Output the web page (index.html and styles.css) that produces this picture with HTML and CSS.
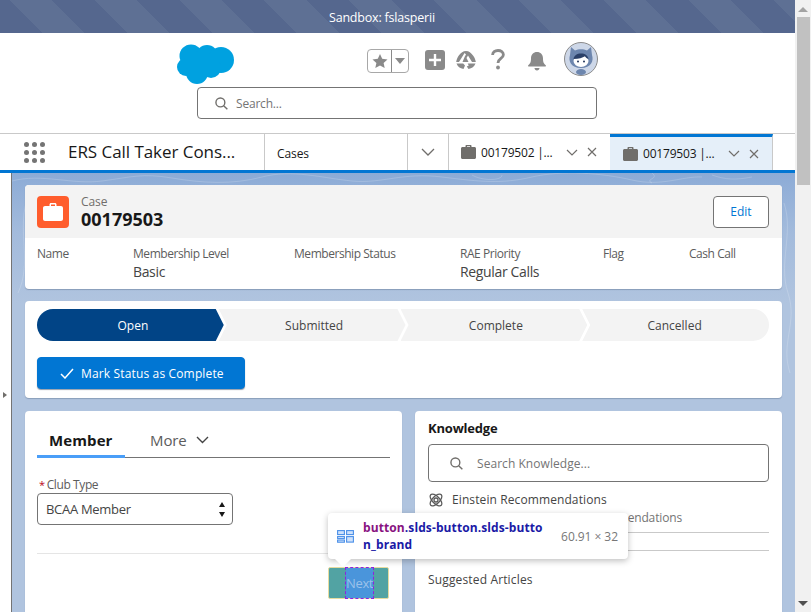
FILE: index.html
```html
<!DOCTYPE html>
<html lang="en">
<head>
<meta charset="utf-8">
<title>ERS Call Taker Console</title>
<link rel="stylesheet" href="styles.css">
</head>
<body>
<div class="page">
  <div class="main">
    <div class="sandbox">Sandbox: fslasperii</div>
    <header class="header">
      <div class="header-top">
        <svg class="logo" width="58" height="42" viewBox="0 0 58 42"><g fill="#00a1e0"><circle cx="14" cy="13" r="11.5"/><circle cx="30" cy="13" r="11"/><circle cx="44" cy="17" r="13"/><circle cx="9" cy="24" r="9"/><circle cx="20" cy="30" r="11"/><circle cx="34" cy="25" r="10"/><rect x="10" y="12" width="30" height="16"/></g></svg>
        <div class="fav">
          <span class="fav-star"><svg width="16" height="16" viewBox="0 0 16 16"><path fill="#8a8a8a" d="M8 1l2.200 4.800 5.300.6-3.900 3.500 1.100 5.100L8 12.400 3.300 15l1.100-5.100L.5 6.400l5.300-.6z"/></svg></span>
          <span class="fav-arrow"><svg width="10" height="6" viewBox="0 0 10 6"><path fill="#8a8a8a" d="M0 0h10L5 6z"/></svg></span>
        </div>
        <svg class="plus" width="20" height="20" viewBox="0 0 20 20"><rect width="20" height="20" rx="3" fill="#8a8a8a"/><path d="M10 4v12M4 10h12" stroke="#fff" stroke-width="2.400"/></svg>
        <svg class="trail" width="20" height="20" viewBox="0 0 20 20"><path fill="#8a8a8a" d="M10 1c3 0 5 2 7 4.500 1.600 2 2.600 4.500 2.800 6.500H16L12 5.500 10.500 8l2 4H6.500L8.800 6.500 10 4.500 8.600 3 3 12H.2C.5 9.500 1.500 7 3 5.200 5 2.800 7 1 10 1zM.5 13.500h6.700L9 15.500 7.500 19C4 18.500 1.500 16.500.5 13.500zm11.200 0h7.800c-1 3-3.700 5-7 5.500l-1.700-2.600 2-1-1.100-1.900z"/></svg>
        <svg class="help" width="14" height="21" viewBox="0 0 14 21"><path fill="none" stroke="#8a8a8a" stroke-width="2.800" d="M1.600 6C1.600 3.200 4 1.500 7 1.500s5.400 1.700 5.400 4.300c0 3.700-5.400 3.700-5.400 8.200"/><circle cx="7" cy="18.500" r="1.900" fill="#8a8a8a"/></svg>
        <svg class="bell" width="20" height="20" viewBox="0 0 20 20"><path fill="#8a8a8a" d="M10 1c3.500 0 6 2.500 6 6.500 0 4 1 5 2.500 6.500.8.800.5 1.500-.5 1.500H2c-1 0-1.300-.7-.5-1.500C3 12.500 4 11.500 4 7.500 4 3.500 6.500 1 10 1zM7.500 17h5c0 1.400-1.100 2.500-2.500 2.500S7.500 18.400 7.500 17z"/></svg>
        <svg class="avatar" width="34" height="34" viewBox="0 0 34 34"><circle cx="17" cy="17" r="16.500" fill="#cdd7e8" stroke="#8b8b8b"/><path fill="#6d86ae" d="M7 5l4 3.500c3.500-1.800 8.500-1.800 12 0L27 5l1 8c2 6-1 13-11 13S4 19 6 13z"/><ellipse cx="17" cy="30" rx="5" ry="3" fill="#6d86ae"/><ellipse cx="17" cy="19" rx="7.500" ry="6" fill="#fff"/><path fill="#2b4068" d="M9.500 17c.5-3.500 3.500-5.500 7.500-5.500s7 2 7.500 5.500c-2-.6-3-1.800-3.500-2.800-2.500 1.700-6 2.400-11.500 2.800z"/><circle cx="14" cy="19.500" r="1" fill="#1f3358"/><circle cx="20" cy="19.500" r="1" fill="#1f3358"/></svg>
      </div>
      <div class="global-search">
        <svg class="ico-search" width="13" height="13" viewBox="0 0 14 14"><circle cx="5.800" cy="5.800" r="4.800" fill="none" stroke="#706e6b" stroke-width="1.500"/><path d="M9.300 9.300l4 4" stroke="#706e6b" stroke-width="1.500"/></svg>
        <span class="placeholder">Search...</span>
      </div>
    </header>
    <nav class="nav">
      <div class="launcher">
        <i></i><i></i><i></i><i></i><i></i><i></i><i></i><i></i><i></i>
      </div>
      <div class="app-name">ERS Call Taker Cons...</div>
      <div class="nav-item">Cases</div>
      <div class="nav-more"><svg class="chev" width="14" height="8" viewBox="0 0 14 8"><path d="M1 1l6 6 6-6" fill="none" stroke="#706e6b" stroke-width="1.300"/></svg></div>
      <div class="tab">
        <svg class="brief" width="15" height="14" viewBox="0 0 15 14"><path fill="#706e6b" d="M4.500 2V1c0-.6.4-1 1-1h4c.6 0 1 .4 1 1v1h3c.8 0 1.500.7 1.500 1.500V12.500c0 .8-.7 1.500-1.500 1.500h-12C.7 14 0 13.300 0 12.500V3.500C0 2.700.7 2 1.500 2zM6 2h3V1.200H6z"/></svg>
        <span class="tab-text">00179502 |...</span>
        <svg class="tab-chev" width="12" height="7" viewBox="0 0 12 7"><path d="M1 1l5 5 5-5" fill="none" stroke="#706e6b" stroke-width="1.200"/></svg>
        <svg class="tab-x" width="10" height="10" viewBox="0 0 10 10"><path d="M1 1l8 8M9 1l-8 8" stroke="#706e6b" stroke-width="1.200"/></svg>
      </div>
      <div class="tab tab-active">
        <svg class="brief" width="15" height="14" viewBox="0 0 15 14"><path fill="#706e6b" d="M4.500 2V1c0-.6.4-1 1-1h4c.6 0 1 .4 1 1v1h3c.8 0 1.500.7 1.500 1.500V12.500c0 .8-.7 1.500-1.500 1.500h-12C.7 14 0 13.300 0 12.500V3.500C0 2.700.7 2 1.500 2zM6 2h3V1.200H6z"/></svg>
        <span class="tab-text">00179503 |...</span>
        <svg class="tab-chev" width="12" height="7" viewBox="0 0 12 7"><path d="M1 1l5 5 5-5" fill="none" stroke="#706e6b" stroke-width="1.200"/></svg>
        <svg class="tab-x" width="10" height="10" viewBox="0 0 10 10"><path d="M1 1l8 8M9 1l-8 8" stroke="#706e6b" stroke-width="1.200"/></svg>
      </div>
    </nav>
    <div class="workspace">
      <aside class="rail"><svg width="4" height="6" viewBox="0 0 4 6"><path d="M0 0l4 3-4 3z" fill="#706e6b"/></svg></aside>
      <div class="content">
        <svg class="topo" width="783" height="439" viewBox="0 0 783 439" aria-hidden="true">
          <g fill="none" stroke="#fff" stroke-opacity=".18">
            <path d="M0 8c30-8 60 4 90 0s40-8 70-3 60 7 90-1 60 1 90 4 50-9 90-4 60 7 90 0 70-4 100 3 50-4 70-3"/>
            <path d="M14 30C6 60 20 90 6 120M772 30c10 30-6 60 4 90s-8 50 2 80"/>
            <path d="M460 2c10 6 30 6 30 0M640 0c8 6-8 6 0 10M700 2c14 5 24 5 40 2"/>
          </g>
        </svg>
        <section class="card case-card">
          <div class="case-head">
            <div class="case-icon"><svg width="20" height="18" viewBox="0 0 20 18"><path fill="#fff" d="M6.500 3V1.500C6.500.7 7.200 0 8 0h4c.8 0 1.500.7 1.500 1.500V3h4.500c1.100 0 2 .9 2 2v11c0 1.100-.9 2-2 2H2c-1.100 0-2-.9-2-2V5c0-1.100.9-2 2-2zM8 3h4V1.500H8z"/></svg></div>
            <div class="case-title">
              <div class="case-type">Case</div>
              <div class="case-num">00179503</div>
            </div>
            <button class="btn-edit">Edit</button>
          </div>
          <div class="highlights">
            <div><div class="hl-label">Name</div></div>
            <div><div class="hl-label">Membership Level</div><div class="hl-value">Basic</div></div>
            <div><div class="hl-label">Membership Status</div></div>
            <div><div class="hl-label">RAE Priority</div><div class="hl-value">Regular Calls</div></div>
            <div><div class="hl-label">Flag</div></div>
            <div><div class="hl-label">Cash Call</div></div>
          </div>
        </section>
        <section class="card progress-card">
          <div class="path">
            <div class="step step-current">Open</div>
            <div class="step">Submitted</div>
            <div class="step">Complete</div>
            <div class="step step-last">Cancelled</div>
          </div>
          <button class="btn-mark"><svg width="14" height="11" viewBox="0 0 14 11"><path d="M1 6l4 4 8-9" fill="none" stroke="#fff" stroke-width="1.500"/></svg>Mark Status as Complete</button>
        </section>
        <div class="columns">
          <section class="card member-card">
            <div class="tabs">
              <div class="tabs-active">Member</div>
              <div class="tabs-more">More<svg width="13" height="8" viewBox="0 0 13 8"><path d="M1 1l5.500 5.500L12 1" fill="none" stroke="#444" stroke-width="1.400"/></svg></div>
            </div>
            <div class="field-label"><span class="req">*</span>Club Type</div>
            <div class="select">BCAA Member
              <svg width="6" height="15" viewBox="0 0 6 15"><path fill="#181818" d="M3 0l3 5H0zM3 15L0 10h6z"/></svg>
            </div>
            <div class="form-line"></div>
            <div class="form-foot">
              <button class="btn-next"><span class="next-content">Next</span></button>
            </div>
          </section>
          <section class="card know-card">
            <h2 class="know-title">Knowledge</h2>
            <div class="know-search">
              <svg width="13" height="13" viewBox="0 0 14 14"><circle cx="5.800" cy="5.800" r="4.800" fill="none" stroke="#706e6b" stroke-width="1.500"/><path d="M9.300 9.300l4 4" stroke="#706e6b" stroke-width="1.500"/></svg>
              <span class="placeholder know-ph">Search Knowledge...</span>
            </div>
            <div class="einstein">
              <svg width="16" height="16" viewBox="0 0 16 16"><g fill="none" stroke="#5c5c5c" stroke-width="1.300"><ellipse cx="8" cy="8" rx="7.500" ry="3.600" transform="rotate(45 8 8)"/><ellipse cx="8" cy="8" rx="7.500" ry="3.600" transform="rotate(-45 8 8)"/><circle cx="8" cy="8" r="2"/></g></svg>
              <span>Einstein Recommendations</span>
            </div>
            <div class="know-sub">No Recommendations</div>
            <div class="know-line"></div>
            <div class="know-gap"></div>
            <div class="suggested">Suggested Articles</div>
          </section>
        </div>
      </div>
    </div>
  </div>
  <div class="scrollbar">
    <svg width="10" height="5" viewBox="0 0 10 5"><path d="M5 0l5 5H0z" fill="#a3a3a3"/></svg>
    <div class="scroll-thumb"></div>
    <svg class="scroll-down" width="10" height="5" viewBox="0 0 10 5"><path d="M0 0h10L5 5z" fill="#505050"/></svg>
  </div>
  <div class="tooltip">
    <svg width="17" height="13" viewBox="0 0 17 13"><g fill="#cfe2fb" stroke="#4a8fe8" stroke-width="1.100"><rect x=".6" y=".6" width="6.800" height="4"/><rect x="9.600" y=".6" width="6.800" height="4"/><rect x=".6" y="6.600" width="6.800" height="1.800" fill="none"/><rect x="9.600" y="6.600" width="6.800" height="5.500"/><rect x=".6" y="10" width="6.800" height="2.200"/></g></svg>
    <div class="tip-sel"><span class="tip-tag">button</span><span class="tip-cls">.slds-button.slds-button_brand</span></div>
    <div class="tip-size">60.91 × 32</div>
  </div>
</div>
</body>
</html>
```

FILE: styles.css
```css
* { box-sizing: border-box; }
html, body { margin: 0; padding: 0; }
body { font-family: "Open Sans", "Noto Sans", "Liberation Sans", sans-serif; color: #3e3e3c; overflow: hidden; }
button { font-family: inherit; cursor: default; }

.page { position: relative; display: flex; width: 811px; height: 612px; overflow: hidden; background: #f1f1f1; }
.main { width: 795px; height: 612px; display: flex; flex-direction: column; flex: none; }

.sandbox { height: 33px; line-height: 36px; padding-left: 329px; color: #fff; font-size: 12.500px; letter-spacing: -.2px; white-space: nowrap;
  background: repeating-linear-gradient(45deg, #55678e 0 30px, #5e7094 30px 60px); }

.header { height: 100px; background: #fff; flex: none; padding-top: 9px; }
.header-top { display: flex; align-items: flex-start; padding-left: 177px; height: 45px; }
.logo { margin-top: 1px; }
.fav { display: flex; width: 42px; height: 24px; margin: 7px 0 0 132px; border: 1px solid #a8a8a8; border-radius: 4px; }
.fav-star { width: 24px; border-right: 1px solid #8a8a8a; display: flex; align-items: center; justify-content: center; }
.fav-arrow { flex: 1; display: flex; align-items: center; justify-content: center; }
.plus { margin: 8px 0 0 16px; }
.trail { margin: 8px 0 0 11px; }
.help { margin: 7px 0 0 15px; }
.bell { margin: 9px 0 0 22px; }
.avatar { margin-left: 17px; }
.global-search { display: flex; align-items: center; width: 400px; height: 32px; margin-left: 197px; border: 1px solid #747474; border-radius: 4px; padding-left: 17px; }
.ico-search { margin-right: 8px; }
.placeholder { font-size: 12px; color: #747474; letter-spacing: -.2px; }
.know-ph { letter-spacing: .05px; }

.nav { height: 40px; flex: none; display: flex; background: #fff; border-top: 1px solid #c9c9c9; border-bottom: 3px solid #0176d3; }
.launcher { width: 68px; padding: 8px 23px 0 24px; display: grid; grid-template-columns: repeat(3, 5px); grid-auto-rows: 5px; gap: 3px; flex: none; align-content: start; }
.launcher i { background: #747474; border-radius: 50%; }
.app-name { width: 196px; font-size: 17px; line-height: 36px; color: #181818; letter-spacing: -.05px; white-space: nowrap; flex: none; }
.nav-item { width: 143px; border-left: 1px solid #c9c9c9; padding-left: 12px; font-size: 12px; line-height: 39px; color: #181818; flex: none; letter-spacing: -.1px; }
.nav-more { width: 41px; border-left: 1px solid #c9c9c9; display: flex; align-items: center; justify-content: center; flex: none; }
.tab { width: 162px; flex: none; display: flex; align-items: center; border-left: 1px solid #c9c9c9; padding-left: 12px; position: relative; }
.tab-text { font-size: 12px; color: #181818; margin-left: 5px; width: 85px; white-space: nowrap; letter-spacing: -.2px; line-height: 18px; padding-top: 1px; }
.tab-chev { margin-left: 0; }
.tab-x { margin-left: 9px; }
.tab-active { width: 163px; background: #e5eff9; border-top: 3px solid #0176d3; border-right: 1px solid #c9c9c9; border-left: 0; margin-top: 0; }
.tab-active .brief { margin-left: 1px; }

.workspace { flex: 1; display: flex; min-height: 0; }
.rail { width: 12px; flex: none; background: #fff; border-right: 1px solid #747474; display: flex; align-items: center; justify-content: center; padding: 4px 2px 0 0; }
.content { position: relative; flex: 1; padding: 12px 13px 0; overflow: hidden;
  background: linear-gradient(180deg, #8cabd6 0, #a3bbdc 60px, #b0c4df 130px); }
.topo { position: absolute; left: 0; top: 0; }

.card { position: relative; background: #fff; border-radius: 4px; box-shadow: 0 1px 1px rgba(90, 110, 140, .45); }
.case-card { height: 104px; overflow: hidden; }
.case-head { height: 53px; background: #f3f3f3; display: flex; align-items: center; padding: 0 13px 0 12px; }
.case-icon { width: 32px; height: 32px; border-radius: 4px; background: #ff5d2d; display: flex; align-items: center; justify-content: center; }
.case-title { margin-left: 12px; flex: 1; }
.case-type { font-size: 12px; line-height: 15px; color: #706e6b; letter-spacing: -.1px; }
.case-num { font-size: 18px; line-height: 20px; font-weight: 700; color: #181818; }
.btn-edit { width: 56px; height: 32px; border: 1px solid #747474; border-radius: 4px; background: #fff; color: #0176d3; font-size: 12px; padding: 0; }
.highlights { display: grid; grid-template-columns: 96px 161px 166px 143px 86px 1fr; padding: 8px 12px 0; }
.hl-label { font-size: 12px; line-height: 16px; color: #5c5c5c; letter-spacing: -.45px; white-space: nowrap; }
.hl-value { font-size: 14px; line-height: 20px; color: #444; letter-spacing: -.35px; white-space: nowrap; }

.progress-card { height: 97px; margin-top: 12px; padding: 8px 13px 0 12px; }
.path { display: flex; height: 32px; border-radius: 16px; overflow: hidden; }
.step { flex: 0 0 186.750px; height: 32px; margin-left: -5px; padding-left: 4px; background: #f3f3f3; font-size: 12px; line-height: 33px; text-align: center; color: #444; letter-spacing: 0;
  clip-path: polygon(0 0, calc(100% - 8px) 0, 100% 50%, calc(100% - 8px) 100%, 0 100%, 8px 50%); }
.step-current { margin-left: 0; padding: 0 0 0 5px; background: #014486; color: #fff; clip-path: polygon(0 0, calc(100% - 8px) 0, 100% 50%, calc(100% - 8px) 100%, 0 100%); }
.step-last { padding: 0 2px 0 0; clip-path: polygon(0 0, 100% 0, 100% 100%, 0 100%, 8px 50%); }
.btn-mark { display: flex; align-items: center; gap: 7px; width: 208px; height: 32px; margin-top: 16px; padding: 1px 0 0 22px; border: 1px solid #0176d3; border-radius: 4px; background: #0176d3; color: #fff; font-size: 12px; letter-spacing: .15px; box-shadow: 0 1px 1px rgba(40, 60, 90, .5); }

.columns { display: grid; grid-template-columns: 377px 367px; gap: 13px; margin-top: 13px; }
.member-card, .know-card { height: 220px; }
.member-card { padding: 0 12px; }
.tabs { display: flex; align-items: flex-end; height: 47px; border-bottom: 1px solid #747474; position: relative; }
.tabs-active { width: 88px; height: 35px; padding-left: 12px; border-bottom: 3px solid #4a9ef8; margin-bottom: -1px; font-size: 15px; line-height: 34px; font-weight: 700; color: #181818; letter-spacing: .1px; }
.tabs-more { display: flex; align-items: center; gap: 9px; margin-left: 25px; height: 33px; font-size: 15px; line-height: 28px; color: #5c5c5c; padding-bottom: 2px; letter-spacing: -.1px; }
.field-label { margin-top: 20px; font-size: 12px; line-height: 14px; color: #5c5c5c; padding-left: 2px; letter-spacing: -.4px; }
.req { color: #ba0517; margin-right: 2px; font-size: 11px; }
.select { display: flex; align-items: center; justify-content: space-between; width: 196px; height: 32px; margin-top: 1px; border: 1px solid #747474; border-radius: 4px; padding: 0 7px 0 8px; font-size: 13px; color: #444; letter-spacing: -.3px; }
.form-line { height: 1px; background: #e5e5e5; margin-top: 28px; }
.form-foot { display: flex; justify-content: flex-end; margin-top: 13px; padding-right: 1px; }
.btn-next { width: 61px; height: 32px; padding: 0 17px; border: 1px solid #e6dca0; border-radius: 2px; background: #52a3a3; display: flex; }
.next-content { display: block; width: 28px; height: 30px; margin-top: 0; background: #4a95db; outline: 1px dashed #9020e0; color: #9cc2ea; font-size: 13px; line-height: 30px; letter-spacing: -.35px; text-align: center; }

.know-card { padding: 0 13px; }
.know-title { margin: 0; padding-top: 9px; font-size: 13px; line-height: 17px; font-weight: 700; color: #181818; letter-spacing: -.2px; }
.know-search { display: flex; align-items: center; gap: 14px; height: 38px; margin-top: 7px; padding-left: 21px; border: 1px solid #747474; border-radius: 4px; }
.einstein { display: flex; align-items: center; gap: 8px; margin-top: 10px; font-size: 12px; line-height: 16px; color: #444; letter-spacing: .1px; }
.know-sub { font-size: 12px; line-height: 16px; color: #747474; padding: 2px 87px 6px 0; text-align: right; letter-spacing: -.15px; white-space: nowrap; }
.know-line { height: 1px; background: #c9c9c9; }
.know-gap { height: 18px; border-bottom: 1px solid #c9c9c9; }
.suggested { margin-top: 21px; font-size: 12px; line-height: 16px; color: #444; letter-spacing: .15px; }

.scrollbar { flex: none; width: 16px; height: 612px; background: #f1f1f1; padding: 7px 3px 0; display: flex; flex-direction: column; align-items: center; }
.scroll-thumb { width: 13px; height: 168px; margin-top: 5px; flex: none; background: #c1c1c1; }
.scroll-down { margin-top: auto; margin-bottom: 6px; }

.tooltip { position: absolute; left: 328px; top: 513px; width: 300px; height: 46px; display: flex; align-items: center; background: #fff; border-radius: 4px; box-shadow: 0 2px 6px rgba(0, 0, 0, .25); padding: 0 10px 0 9px; }
.tooltip::after { content: ""; position: absolute; left: 7px; bottom: -8px; border: 8px solid transparent; border-top-color: #fff; border-bottom: 0; }
.tip-sel { width: 182px; margin-left: 9px; font-size: 12px; line-height: 17px; font-weight: 700; word-break: break-all; letter-spacing: .1px; }
.tip-tag { color: #881280; }
.tip-cls { color: #1a1aa6; }
.tip-size { margin-left: auto; font-size: 12px; color: #777; letter-spacing: -.05px; white-space: nowrap; }
```
